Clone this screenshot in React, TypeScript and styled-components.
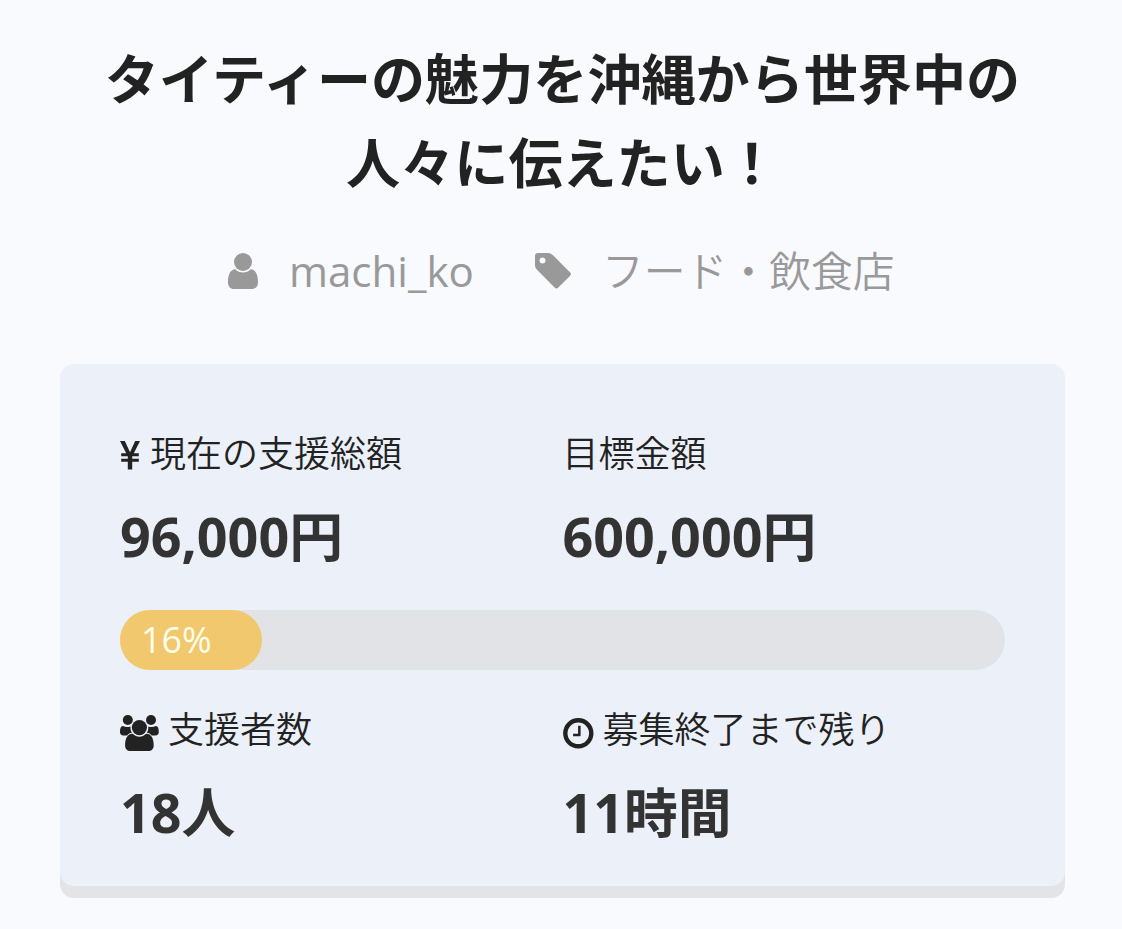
import React from 'react';
import styled, { createGlobalStyle } from 'styled-components';

const GlobalStyle = createGlobalStyle`
  * { box-sizing: border-box; }
  body {
    margin: 0;
    background: #f8fafe;
    color: #222;
    font-family: "Open Sans", "Noto Sans CJK JP", sans-serif;
  }
`;

const Page = styled.main`
  height: 929px;
  padding: 37px 57px 0 60px;
  overflow: hidden;
`;

const Title = styled.h1`
  margin: 0;
  text-align: center;
  font-size: 54.1px;
  line-height: 84px;
  font-weight: 700;
  white-space: nowrap;
`;

const Meta = styled.div`
  display: flex;
  align-items: center;
  height: 60px;
  margin-top: 36px;
  padding-left: 168px;
  color: #999;
  font-size: 41.8px;
  line-height: 58px;
  font-weight: 350;
  white-space: nowrap;
`;

const MetaItem = styled.div<{ $width?: number; $gap: number }>`
  display: flex;
  align-items: center;
  gap: ${(p) => p.$gap}px;
  width: ${(p) => (p.$width ? `${p.$width}px` : 'auto')};
`;

const UserName = styled.span`
  font-size: 42.1px;
  font-weight: 400;
`;

const Card = styled.section`
  height: 522px;
  margin-top: 63px;
  padding: 60px 60px 0;
  border-radius: 14px;
  background: #ebf0f9;
  box-shadow: 0 12px 0 #e2e4e6;
`;

const Stats = styled.div`
  display: grid;
  grid-template-columns: 1fr 1fr;
`;

const Label = styled.div`
  display: flex;
  align-items: center;
  height: 60px;
  font-size: 36px;
  line-height: 60px;
  font-weight: 350;
  white-space: nowrap;
`;

const Value = styled.div`
  height: 84px;
  margin-top: 10px;
  color: #333;
  font-size: 53.8px;
  line-height: 84px;
  font-weight: 700;
  white-space: nowrap;
`;

const Track = styled.div`
  height: 60px;
  margin: 32px 0 30px;
  border-radius: 30px;
  background: #e2e3e6;
`;

const Fill = styled.div`
  height: 60px;
  padding-left: 21px;
  border-radius: 30px;
  background: #f1c86d;
  color: #ffffeb;
  font-size: 35.8px;
  line-height: 58px;
`;

const Icon = styled.svg<{ $top?: number; $right?: number }>`
  display: block;
  flex: none;
  fill: currentColor;
  margin-top: ${(p) => p.$top ?? 0}px;
  margin-right: ${(p) => p.$right ?? 0}px;
`;

const UserIcon = () => (
  <Icon width="30" height="36" viewBox="0 0 30 36">
    <circle cx="15" cy="9" r="9" />
    <path d="M7.3 16.3C2 16.7 0 22 0 29.2C0 33.3 2.3 36 6 36H24C27.7 36 30 33.3 30 29.2C30 22 28 16.7 22.7 16.3C20.5 18.4 18 19.5 15 19.5S9.5 18.4 7.3 16.3Z" />
  </Icon>
);

const TagIcon = () => (
  <Icon width="36" height="36" viewBox="0 0 36 36">
    <path
      fillRule="evenodd"
      d="M0 3Q0 0 3 0H12.7Q15.6 0 18 2.2L35.2 19.4Q36.8 21 35.2 22.7L23.1 34.7Q21.4 36.1 19.8 34.7L2.2 17Q0 14.8 0 12.6ZM7.5 4.5A3 3 0 1 0 7.5 10.5A3 3 0 1 0 7.5 4.5Z"
    />
  </Icon>
);

const YenIcon = () => (
  <Icon width="20" height="29" viewBox="0 0 20 29" $top={3} $right={10}>
    <path d="M0 0H4.8L10 11.2L15.2 0H20L13.8 12.2H18.8V15.2H12.2V17.7H18.8V20.7H12.2V28.5H7.8V20.7H1.2V17.7H7.8V15.2H1.2V12.2H6.2Z" />
  </Icon>
);

const UsersIcon = () => (
  <Icon width="39" height="36" viewBox="0 0 39 36" $top={6} $right={9}>
    <circle cx="7.8" cy="5" r="5" />
    <circle cx="31" cy="5" r="5" />
    <circle cx="19.4" cy="12.6" r="7.6" />
    <path d="M3 11C.5 11 0 14.5 0 17.3C0 19.3 1.4 20.4 3.4 20.4H7.2C8.5 18.8 10 18 12 17.8C10.8 16 10.3 14 10.5 11.4C7.8 12.3 5.2 12.1 3 11Z" />
    <path d="M35.8 11C38.3 11 38.8 14.5 38.8 17.3C38.8 19.3 37.4 20.4 35.4 20.4H31.6C30.3 18.8 28.8 18 26.8 17.8C28 16 28.5 14 28.3 11.4C31 12.3 33.6 12.1 35.8 11Z" />
    <path d="M12.7 18.8C7.3 18.8 5.1 23.7 5.1 30.4C5.1 33.8 7.2 36 10.6 36H28.2C31.6 36 33.7 33.8 33.7 30.4C33.7 23.7 31.5 18.8 26.1 18.8C24 20.7 21.9 21.7 19.4 21.7S14.8 20.7 12.7 18.8Z" />
  </Icon>
);

const ClockIcon = () => (
  <Icon width="31" height="31" viewBox="1.1 0 31 31" $top={6} $right={9}>
    <circle cx="16.4" cy="15.3" r="13" fill="none" stroke="currentColor" strokeWidth="4.4" />
    <path d="M16.2 7.7H18.7V17.6Q18.7 18.2 18.1 18.2H11.2V15.7H16.2Z" />
  </Icon>
);

const progress = 16;

export default function App() {
  return (
    <>
      <GlobalStyle />
      <Page>
        <Title>
          タイティーの魅力を沖縄から世界中の
          <br />
          人々に伝えたい！
        </Title>
        <Meta>
          <MetaItem $width={307} $gap={31}>
            <UserIcon />
            <UserName>machi_ko</UserName>
          </MetaItem>
          <MetaItem $gap={31}>
            <TagIcon />
            <span>フード・飲食店</span>
          </MetaItem>
        </Meta>
        <Card>
          <Stats>
            <div>
              <Label>
                <YenIcon />
                現在の支援総額
              </Label>
              <Value>96,000円</Value>
            </div>
            <div>
              <Label>目標金額</Label>
              <Value>600,000円</Value>
            </div>
          </Stats>
          <Track>
            <Fill style={{ width: `${progress}%` }}>{progress}%</Fill>
          </Track>
          <Stats>
            <div>
              <Label>
                <UsersIcon />
                支援者数
              </Label>
              <Value>18人</Value>
            </div>
            <div>
              <Label>
                <ClockIcon />
                募集終了まで残り
              </Label>
              <Value>11時間</Value>
            </div>
          </Stats>
        </Card>
      </Page>
    </>
  );
}
